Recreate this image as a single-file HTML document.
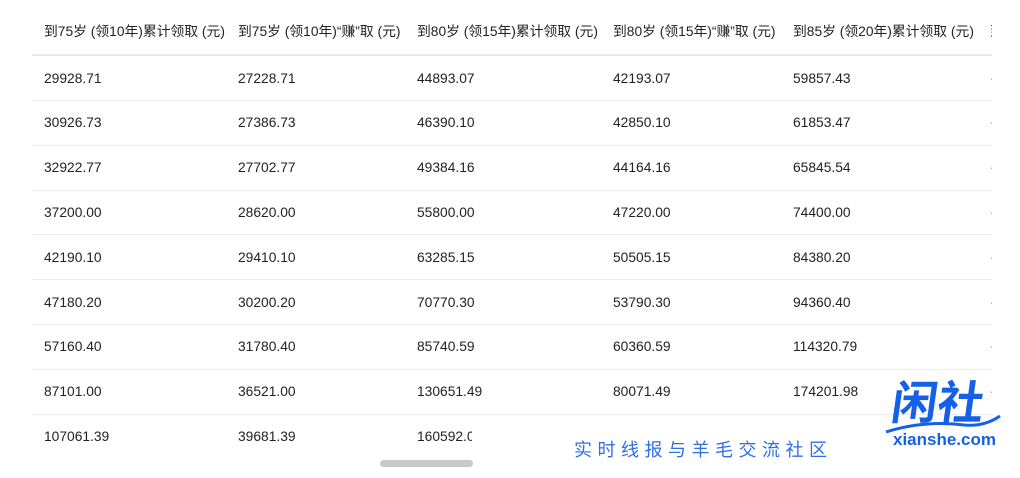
<!DOCTYPE html>
<html><head><meta charset="utf-8">
<style>
html,body{margin:0;padding:0;background:#fff;width:1020px;height:478px;overflow:hidden;position:relative;
font-family:"Liberation Sans","Noto Sans CJK SC",sans-serif;color:#222;font-size:13.8px}
.clip{position:absolute;left:0;top:0;width:992px;height:478px;overflow:hidden}
.t{position:absolute;white-space:nowrap;line-height:16px}
.hl{position:absolute;left:32px;width:960px;height:1px;background:#ececec}
</style></head><body>
<div class="clip">
<div class="t" style="left:44px;top:24px">到75岁 (领10年)累计领取 (元)</div>
<div class="t" style="left:238px;top:24px">到75岁 (领10年)“赚”取 (元)</div>
<div class="t" style="left:417px;top:24px">到80岁 (领15年)累计领取 (元)</div>
<div class="t" style="left:613px;top:24px">到80岁 (领15年)“赚”取 (元)</div>
<div class="t" style="left:793px;top:24px">到85岁 (领20年)累计领取 (元)</div>
<div class="t" style="left:990px;top:24px">到</div>
<div class="hl" style="top:54px;height:2px;background:#e8e8e8"></div>
<div id="rows"></div>
</div>
<div style="position:absolute;left:472px;top:418px;width:420px;height:60px;background:#fff"></div>
<div style="position:absolute;left:380px;top:460px;width:93px;height:7px;border-radius:4px;background:#c9c9c9"></div>
<div class="t" style="left:574px;top:440px;font-size:18px;letter-spacing:5.5px;color:#2f6fe4;line-height:20px">实时线报与羊毛交流社区</div>
<div class="t" style="left:892px;top:378px;font-size:46px;line-height:50px;font-weight:bold;color:#1560e6;transform:skewX(-8deg)">闲社</div>
<svg style="position:absolute;left:884px;top:412px" width="120" height="24"><path d="M2 20 Q40 8 80 13 Q100 15 116 4" stroke="#1560e6" stroke-width="3" fill="none"/></svg>
<div class="t" style="left:893px;top:431px;font-size:17px;line-height:18px;font-weight:bold;color:#1560e6">xianshe.com</div>
<script>
var d=[["29928.71","27228.71","44893.07","42193.07","59857.43"],["30926.73","27386.73","46390.10","42850.10","61853.47"],["32922.77","27702.77","49384.16","44164.16","65845.54"],["37200.00","28620.00","55800.00","47220.00","74400.00"],["42190.10","29410.10","63285.15","50505.15","84380.20"],["47180.20","30200.20","70770.30","53790.30","94360.40"],["57160.40","31780.40","85740.59","60360.59","114320.79"],["87101.00","36521.00","130651.49","80071.49","174201.98"],["107061.39","39681.39","160592.08","",""]];
var xs=[44,238,417,613,793],h="";
d.forEach(function(r,i){var y=70.5+i*44.8;r.forEach(function(v,j){h+='<div class="t" style="left:'+xs[j]+'px;top:'+y+'px">'+v+'</div>'});
h+='<div class="t" style="left:990px;top:'+y+'px">·</div>';
if(i<8)h+='<div class="hl" style="top:'+(100+i*44.8)+'px"></div>';});
document.getElementById('rows').innerHTML=h;
</script>
</body></html>
